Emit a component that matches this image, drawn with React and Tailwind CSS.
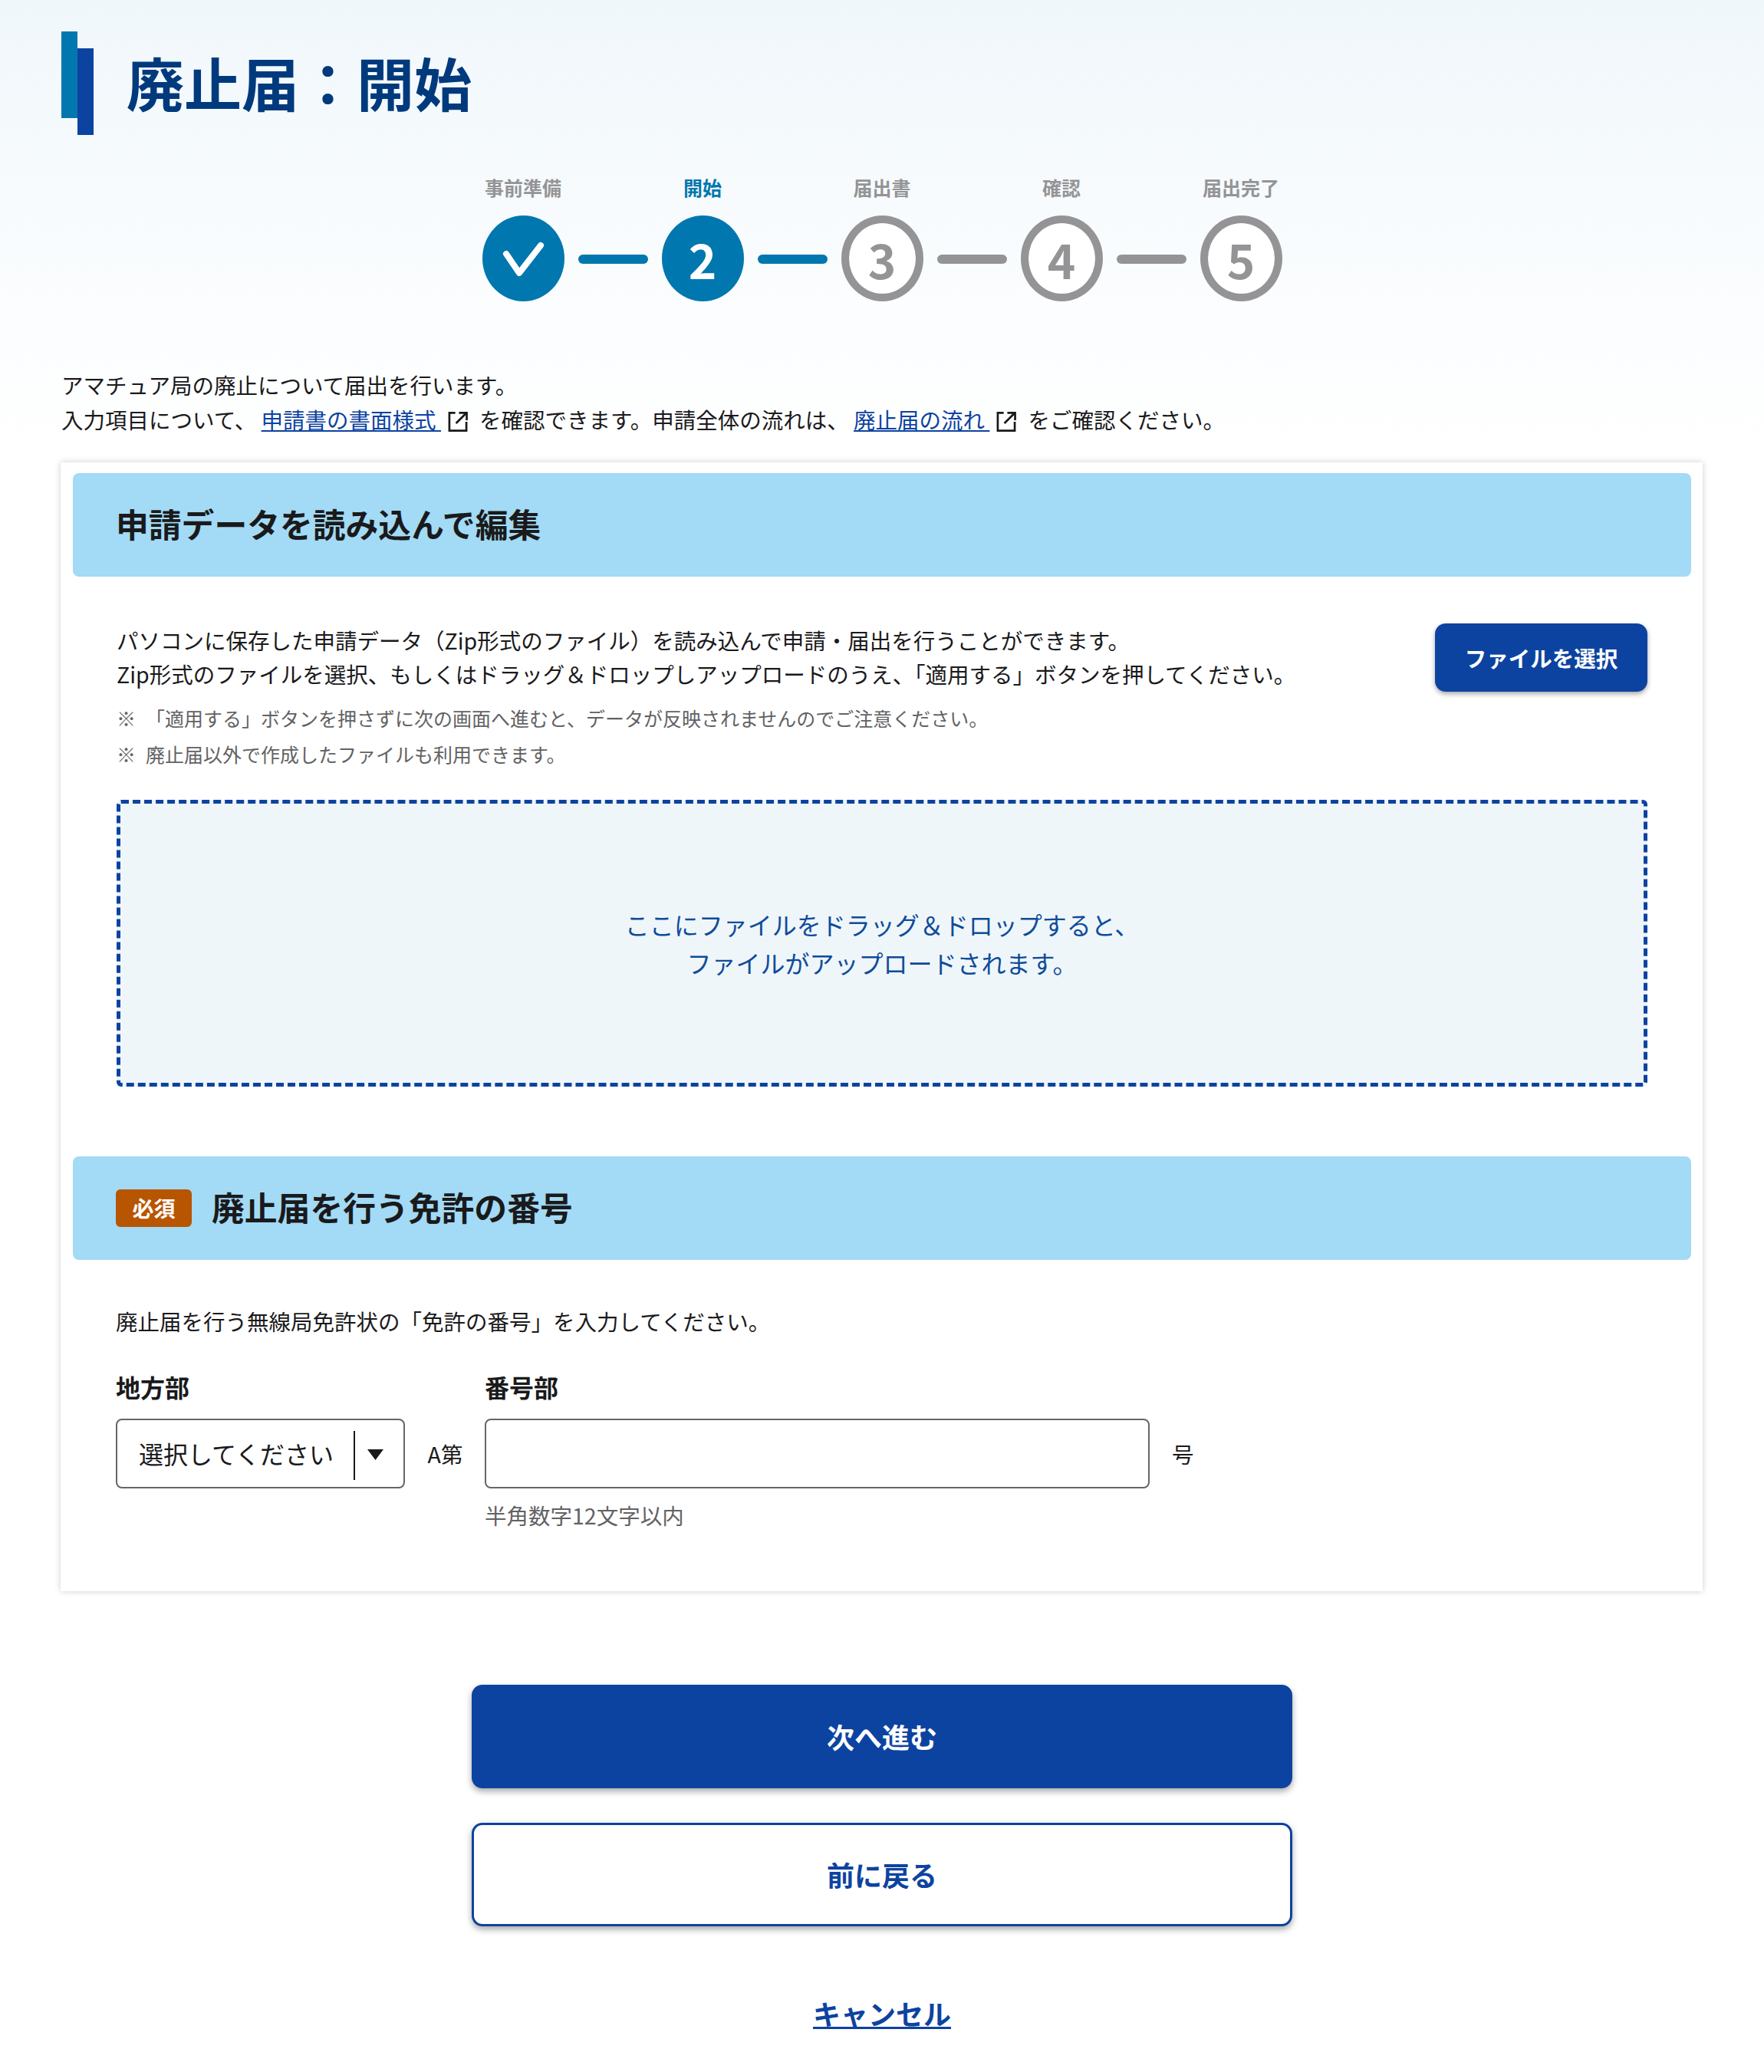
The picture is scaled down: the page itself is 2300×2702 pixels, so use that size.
import React from "react";

const steps = [
  { label: "事前準備", state: "done" },
  { label: "開始", state: "current", num: "2" },
  { label: "届出書", state: "todo", num: "3" },
  { label: "確認", state: "todo", num: "4" },
  { label: "届出完了", state: "todo", num: "5" },
];

const ExternalIcon = () => (
  <svg
    className="inline-block w-[26px] h-[28px] ml-[9px] mr-[15px] align-[-5px]"
    viewBox="0 0 27 28"
    fill="none"
    stroke="#1a1a1c"
    strokeWidth="2.8"
  >
    <path d="M10 2H2v24h23V14" />
    <path d="M11 16L24.5 2.5M15 2h10.5v10" />
  </svg>
);

const Step = ({ step }) => {
  const active = step.state !== "todo";
  return (
    <div className="flex flex-col items-center w-[107px]">
      <span
        className={`whitespace-nowrap text-[25px] leading-[36px] font-bold mb-[19px] ${
          step.state === "current" ? "text-[#0077ae]" : "text-[#949496]"
        }`}
      >
        {step.label}
      </span>
      <div
        className={`w-[107px] h-[112px] rounded-[50%] flex items-center justify-center text-[62px] font-bold ${
          active ? "bg-[#0077ae] text-white" : "bg-white border-[10px] border-[#949496] text-[#949496]"
        }`}
      >
        {step.state === "done" ? (
          <svg className="w-[107px] h-[112px]" viewBox="0 0 107 112" fill="none">
            <path d="M31 50L48 75L76 39" stroke="#fff" strokeWidth="8" strokeLinecap="round" strokeLinejoin="round" />
          </svg>
        ) : (
          step.num
        )}
      </div>
    </div>
  );
};

const SectionHead = ({ badge, children }) => (
  <div className="h-[135px] rounded-[8px] bg-[#a3daf5] flex items-center px-[56px] text-[42.8px] font-bold text-[#1a1a1c]">
    {badge && (
      <span className="w-[99px] h-[49px] mr-[26px] rounded-[6px] bg-[#b85500] text-white text-[28px] flex items-center justify-center">
        {badge}
      </span>
    )}
    <span className="mb-[4px]">{children}</span>
  </div>
);

const App = () => {
  return (
    <div
      className="min-h-[2702px] pt-[41px] bg-[linear-gradient(180deg,#f0f7fb_0px,#fbfdfe_400px,#ffffff_600px)] text-[#1a1a1c] text-[28.5px] leading-[45px]"
      style={{ fontFamily: '"Noto Sans CJK JP", "Noto Sans", sans-serif' }}
    >
      <div className="flex items-start pl-[80px]">
        <div className="flex items-start w-[42px] h-[135px]">
          <div className="w-[21px] h-[113px] bg-[#0077ae]" />
          <div className="w-[21px] h-[113px] mt-[22px] bg-[#0d43a0]" />
        </div>
        <h1 className="ml-[43px] text-[75px] leading-[131px] font-bold text-[#003a7d] whitespace-nowrap">廃止届：開始</h1>
      </div>

      <div className="mt-[50px] flex items-end justify-center">
        {steps.map((step, i) => (
          <React.Fragment key={step.label}>
            <Step step={step} />
            {i < steps.length - 1 && (
              <div
                className={`w-[91px] h-[12px] mx-[18px] mb-[49px] rounded-full ${
                  i < 2 ? "bg-[#0077ae]" : "bg-[#949496]"
                }`}
              />
            )}
          </React.Fragment>
        ))}
      </div>

      <div className="mt-[86px] ml-[80px]">
        <p>アマチュア局の廃止について届出を行います。</p>
        <p>
          入力項目について、 <a className="text-[#0d43a0] underline">申請書の書面様式 </a>
          <ExternalIcon />
          を確認できます。申請全体の流れは、 <a className="text-[#0d43a0] underline">廃止届の流れ </a>
          <ExternalIcon />
          をご確認ください。
        </p>
      </div>

      <div className="mt-[34px] ml-[79px] w-[2141px] pt-[14px] pl-[16px] pr-[15px] pb-[79px] bg-white shadow-[0_0_8px_rgba(0,0,0,0.2)]">
        <SectionHead>申請データを読み込んで編集</SectionHead>

        <div className="px-[57px]">
          <div className="mt-[61px] flex justify-between items-start">
            <div className="leading-[44px]">
              <p>パソコンに保存した申請データ（Zip形式のファイル）を読み込んで申請・届出を行うことができます。</p>
              <p>Zip形式のファイルを選択、もしくはドラッグ＆ドロップしアップロードのうえ、「適用する」ボタンを押してください。</p>
            </div>
            <button className="w-[277px] h-[89px] rounded-[14px] bg-[#0d43a0] text-white font-bold shadow-[0_3px_6px_rgba(0,0,0,0.35)]">
              ファイルを選択
            </button>
          </div>

          <div className="mt-[14px] flex flex-col gap-[7px] text-[25px] leading-[40px] text-[#626264]">
            <p className="flex">
              <span className="w-[38px]">※</span>「適用する」ボタンを押さずに次の画面へ進むと、データが反映されませんのでご注意ください。
            </p>
            <p className="flex">
              <span className="w-[38px]">※</span>廃止届以外で作成したファイルも利用できます。
            </p>
          </div>

          <div className="mt-[40px] h-[374px] rounded-[6px] border-[5px] border-dashed border-[#0d43a0] bg-[#eff6fa] flex flex-col items-center justify-center text-[32px] leading-[50px] text-[#0f4c9a]">
            <p>ここにファイルをドラッグ＆ドロップすると、</p>
            <p>ファイルがアップロードされます。</p>
          </div>
        </div>

        <div className="mt-[91px]">
          <SectionHead badge="必須">廃止届を行う免許の番号</SectionHead>
        </div>

        <div className="px-[56px]">
          <p className="mt-[58px] leading-[44px]">廃止届を行う無線局免許状の「免許の番号」を入力してください。</p>

          <div className="mt-[41px] flex items-start">
            <div className="w-[377px]">
              <p className="text-[32px] leading-[44px] font-bold mb-[20px]">地方部</p>
              <div className="relative h-[91px] rounded-[8px] border-2 border-[#666668] flex items-center pl-[28px] text-[32px]">
                選択してください
                <span className="absolute left-[308px] top-[14px] w-[2px] h-[64px] bg-[#1a1a1c]" />
                <svg className="absolute left-[326px] top-[38px] w-[21px] h-[14px]" viewBox="0 0 21 14">
                  <path d="M0 0H21L10.5 14Z" fill="#1a1a1c" />
                </svg>
              </div>
            </div>

            <span className="w-[104px] pl-[1px] mt-[64px] h-[91px] flex items-center justify-center">A第</span>

            <div className="w-[867px]">
              <p className="text-[32px] leading-[44px] font-bold mb-[20px]">番号部</p>
              <input className="block w-full h-[91px] rounded-[8px] border-2 border-[#666668] outline-none bg-white" type="text" />
              <p className="mt-[15px] leading-[40px] text-[#626264]">半角数字12文字以内</p>
            </div>

            <span className="ml-[29px] mt-[64px] h-[91px] flex items-center">号</span>
          </div>
        </div>
      </div>

      <div className="mt-[122px] flex flex-col items-center">
        <button className="w-[1070px] h-[135px] rounded-[14px] bg-[#0d43a0] text-white text-[36px] font-bold shadow-[0_4px_8px_rgba(0,0,0,0.35)]">
          次へ進む
        </button>
        <button className="mt-[45px] w-[1070px] h-[135px] rounded-[14px] bg-white border-[3px] border-[#0d43a0] text-[#0d43a0] text-[36px] font-bold shadow-[0_4px_8px_rgba(0,0,0,0.35)]">
          前に戻る
        </button>
        <a className="mt-[88px] text-[36px] leading-[50px] font-bold text-[#0d43a0] underline">キャンセル</a>
      </div>
    </div>
  );
};

export default App;
